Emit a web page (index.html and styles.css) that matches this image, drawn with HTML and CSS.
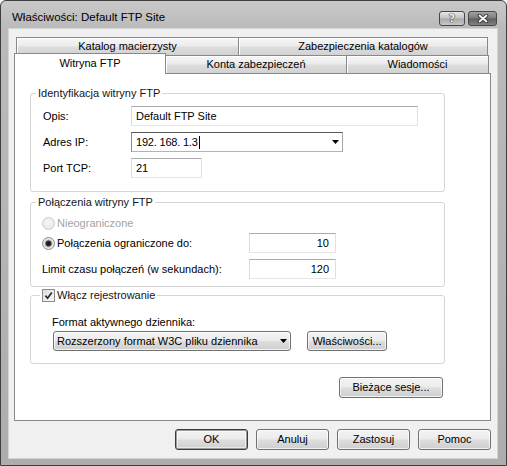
FILE: index.html
```html
<!DOCTYPE html>
<html lang="pl">
<head>
<meta charset="utf-8">
<title>Właściwości: Default FTP Site</title>
<link rel="stylesheet" href="styles.css">
</head>
<body>
<div class="window">
  <div class="titlebar">
    <span class="title">Właściwości: Default FTP Site</span>
    <div class="caption-btns">
      <div class="cbtn help"><span class="qmark">?</span></div>
      <div class="cbtn close">
        <svg width="12" height="9" viewBox="0 0 12 9"><path d="M2.5 1.5 L9.5 7.5 M9.5 1.5 L2.5 7.5" stroke="#2e2e2e" stroke-width="3.6" stroke-linecap="round"/><path d="M2.5 1.5 L9.5 7.5 M9.5 1.5 L2.5 7.5" stroke="#ffffff" stroke-width="1.8" stroke-linecap="round"/></svg>
      </div>
    </div>
  </div>
  <div class="client">
    <div class="tabs">
      <div class="tabrow row1">
        <div class="tab first t-kat">Katalog macierzysty</div>
        <div class="tab t-zab">Zabezpieczenia katalogów</div>
      </div>
      <div class="tabrow row2">
        <div class="tab first sel t-wit">Witryna FTP</div>
        <div class="tab t-konta">Konta zabezpieczeń</div>
        <div class="tab t-wiad">Wiadomości</div>
      </div>
    </div>
    <div class="panel">
      <fieldset class="group g1">
        <legend>Identyfikacja witryny FTP</legend>
        <div class="frow">
          <span class="lbl lbl-id">Opis:</span>
          <div class="edit w-opis">Default FTP Site</div>
        </div>
        <div class="frow gap6">
          <span class="lbl lbl-id">Adres IP:</span>
          <div class="edit ip"><span>192. 168. 1.3</span><span class="caret"></span>
            <svg class="arrow" width="7" height="4" viewBox="0 0 7 4"><path d="M0 0H7L3.5 4Z" fill="#000"/></svg>
          </div>
        </div>
        <div class="frow gap6">
          <span class="lbl lbl-id">Port TCP:</span>
          <div class="edit w-port">21</div>
        </div>
      </fieldset>

      <fieldset class="group g2">
        <legend>Połączenia witryny FTP</legend>
        <div class="rrow disabled">
          <span class="radio"></span><span>Nieograniczone</span>
        </div>
        <div class="frow gap2">
          <span class="lbl lbl-conn"><span class="radio checked"></span><span>Połączenia ograniczone do:</span></span>
          <div class="edit num">10</div>
        </div>
        <div class="frow gap6">
          <span class="lbl lbl-conn">Limit czasu połączeń (w sekundach):</span>
          <div class="edit num">120</div>
        </div>
      </fieldset>

      <fieldset class="group g3">
        <legend class="chk-legend"><span class="check"><svg width="9" height="9" viewBox="0 0 9 9"><path d="M1.4 4.6 L3.6 7.2 L7.8 1.4" fill="none" stroke="#2a2a2a" stroke-width="1.7"/></svg></span><span>Włącz rejestrowanie</span></legend>
        <div class="fmt-label">Format aktywnego dziennika:</div>
        <div class="fmt-row">
          <div class="btn combo"><span>Rozszerzony format W3C pliku dziennika</span>
            <svg class="arrow" width="7" height="4" viewBox="0 0 7 4"><path d="M0 0H7L3.5 4Z" fill="#000"/></svg>
          </div>
          <button class="btn props">Właściwości...</button>
        </div>
      </fieldset>

      <div class="sess-row">
        <button class="btn sess">Bieżące sesje...</button>
      </div>
    </div>
    <div class="dlg-buttons">
      <button class="btn dlg default">OK</button>
      <button class="btn dlg">Anuluj</button>
      <button class="btn dlg">Zastosuj</button>
      <button class="btn dlg">Pomoc</button>
    </div>
  </div>
</div>
</body>
</html>
```

FILE: styles.css
```css
html, body {
  margin: 0;
  padding: 0;
}
body {
  width: 507px;
  height: 466px;
  overflow: hidden;
  font-family: "Liberation Sans", Arial, sans-serif;
  font-size: 11px;
  color: #000;
  background: #fff;
}

.window {
  box-sizing: border-box;
  width: 507px;
  height: 466px;
  border: 1px solid #3e3e3e;
  border-radius: 6px 6px 0 0;
  background: linear-gradient(to bottom, #c9c9c9 0px, #bababa 28px, #b3b3b3 60%, #adadad 100%);
  display: flex;
  flex-direction: column;
  padding: 0 9px 7px 8px;
}

/* title bar */
.titlebar {
  height: 28px;
  display: flex;
  align-items: flex-start;
  flex: 0 0 auto;
}
.title {
  margin: 9px 0 0 3px;
  font-size: 11.5px;
  line-height: 14px;
  color: #000;
}
.caption-btns {
  margin-left: auto;
  margin-top: 10px;
  display: flex;
  gap: 3px;
}
.cbtn {
  box-sizing: border-box;
  height: 15px;
  border: 1px solid #474747;
  border-radius: 3px;
  display: flex;
  align-items: center;
  justify-content: center;
}
.help {
  width: 26px;
  background: linear-gradient(to bottom, #e6e6e6 0%, #c2c2c2 48%, #a9a9a9 52%, #c6c6c6 100%);
}
.qmark {
  font-family: "DejaVu Sans", sans-serif;
  font-weight: bold;
  font-size: 11px;
  line-height: 11px;
  color: #f2f2f2;
  text-shadow: 0 0 1px #333, 0 0 1px #333, 0 0 1px #333;
}
.close {
  width: 29px;
  background: linear-gradient(to bottom, #a2a2a2 0%, #7a7a7a 48%, #5e5e5e 52%, #828282 100%);
}

/* client area */
.client {
  flex: 1 1 auto;
  box-sizing: border-box;
  background: #f0f0f0;
  box-shadow: 0 0 0 1px #d4d4d4;
  display: flex;
  flex-direction: column;
  padding: 8px 6px 8px 5px;
  min-height: 0;
}

/* tabs */
.tabs {
  flex: 0 0 auto;
}
.tabrow {
  display: flex;
  height: 18px;
  padding-left: 2px;
}
.tab {
  box-sizing: border-box;
  height: 18px;
  border-top: 1px solid #898989;
  border-right: 1px solid #898989;
  background: linear-gradient(to bottom, #f6f6f6 0%, #ececec 45%, #dcdcdc 55%, #d2d2d2 100%);
  box-shadow: inset 1px 1px 0 #ffffff;
  text-align: center;
  line-height: 17px;
  white-space: nowrap;
  color: #000;
}
.tab.first {
  border-left: 1px solid #898989;
}
.t-kat { flex: 0 0 223px; }
.t-zab { flex: 0 0 249px; }
.t-wit { flex: 0 0 152px; }
.t-konta { flex: 0 0 181px; }
.t-wiad { flex: 0 0 142px; }

.tab.sel {
  position: relative;
  z-index: 1;
  height: 21px;
  margin-top: -2px;
  margin-left: -2px;
  background: #ffffff;
  box-shadow: none;
  line-height: 18px;
}

/* panel */
.panel {
  flex: 1 1 auto;
  box-sizing: border-box;
  border: 1px solid #898989;
  background: #ffffff;
  padding: 12px 45px 0 15px;
  display: flex;
  flex-direction: column;
  min-height: 0;
}

.group {
  margin: 0;
  border: 1px solid #d5d5d5;
  border-radius: 3px;
  min-width: 0;
}
.group legend {
  padding: 0 2px;
  line-height: 14px;
  color: #151515;
}
.g1 { padding: 6px 12px 13px 12px; }
.g1 legend { margin-left: -7px; }
.g2 { margin-top: 3px; padding: 6px 12px 7px 11px; }
.g2 legend { margin-left: -6px; }
.g3 { margin-top: 1px; padding: 13px 12px 12px 21px; }
.group legend.chk-legend { margin-left: -12px; }

.frow {
  display: flex;
  align-items: center;
  height: 20px;
}
.gap6 { margin-top: 6px; }
.gap2 { margin-top: 2px; }

.lbl { flex: 0 0 auto; }
.lbl-id { width: 88px; }
.lbl-conn {
  width: 207px;
  display: flex;
  align-items: center;
  gap: 2px;
}

.edit {
  box-sizing: border-box;
  height: 20px;
  border: 1px solid;
  border-color: #ababab #e0e0e0 #e6e6e6 #dadada;
  background: #ffffff;
  padding: 0 4px;
  line-height: 18px;
  white-space: nowrap;
}
.w-opis { width: 287px; }
.w-port { width: 71px; }
.ip {
  width: 212px;
  border-color: #5a5a5a #a6a6a6 #b4b4b4 #8a8a8a;
  display: flex;
  align-items: center;
  padding-right: 3px;
  letter-spacing: -0.2px;
}
.caret {
  display: inline-block;
  width: 1px;
  height: 13px;
  background: #000;
  margin-left: 1px;
}
.arrow {
  margin-left: auto;
  flex: 0 0 auto;
}
.num {
  width: 87px;
  text-align: right;
  padding-right: 6px;
}

/* radios and checkboxes */
.rrow {
  display: flex;
  align-items: center;
  gap: 2px;
  height: 16px;
}
.disabled { color: #a3a3a3; }
.radio {
  flex: 0 0 auto;
  box-sizing: border-box;
  width: 13px;
  height: 13px;
  border-radius: 50%;
  border: 1px solid #8c8c8c;
  background: radial-gradient(circle at 50% 40%, #ffffff 0, #e6e6e6 60%, #cfcfcf 100%);
}
.disabled .radio {
  border-color: #cbcbcb;
  background: radial-gradient(circle at 50% 40%, #f6f6f6 0, #e4e4e4 100%);
}
.radio.checked {
  background: radial-gradient(circle, #141414 0, #2c2c2c 2.4px, #9a9a9a 3.2px, #e2e2e2 4.2px, #f6f6f6 100%);
}

.chk-legend {
  display: flex;
  align-items: center;
  gap: 2px;
}
.check {
  box-sizing: border-box;
  width: 13px;
  height: 13px;
  border: 1px solid #8c8c8c;
  background: linear-gradient(135deg, #dedede 0%, #f8f8f8 100%);
  display: flex;
  align-items: center;
  justify-content: center;
}

.fmt-label {
  line-height: 14px;
  height: 14px;
}
.fmt-row {
  display: flex;
  align-items: center;
  margin-top: 2px;
}

/* buttons */
.btn {
  box-sizing: border-box;
  height: 21px;
  border: 1px solid #707070;
  border-radius: 3px;
  background: linear-gradient(to bottom, #f3f3f3 0%, #ebebeb 48%, #dddddd 52%, #cfcfcf 100%);
  box-shadow: inset 0 0 0 1px rgba(255, 255, 255, 0.7);
  font: inherit;
  color: #000;
  padding: 0;
  margin: 0;
  line-height: 19px;
  text-align: center;
  white-space: nowrap;
}
.combo {
  width: 238px;
  height: 20px;
  margin-left: 1px;
  display: flex;
  align-items: center;
  padding: 0 3px 0 3px;
  text-align: left;
}
.props {
  width: 80px;
  height: 20px;
  margin-left: 16px;
}
.sess-row {
  display: flex;
  justify-content: flex-end;
  margin-top: 13px;
  padding-right: 2px;
}
.sess { width: 104px; }

.dlg-buttons {
  flex: 0 0 auto;
  display: flex;
  justify-content: flex-end;
  gap: 8px;
  margin-top: 8px;
}
.dlg { width: 73px; }
.default {
  border-color: #3a3a3a;
  box-shadow: inset 0 0 0 1px #9c9c9c, inset 0 0 0 2px rgba(255, 255, 255, 0.5);
}
```
